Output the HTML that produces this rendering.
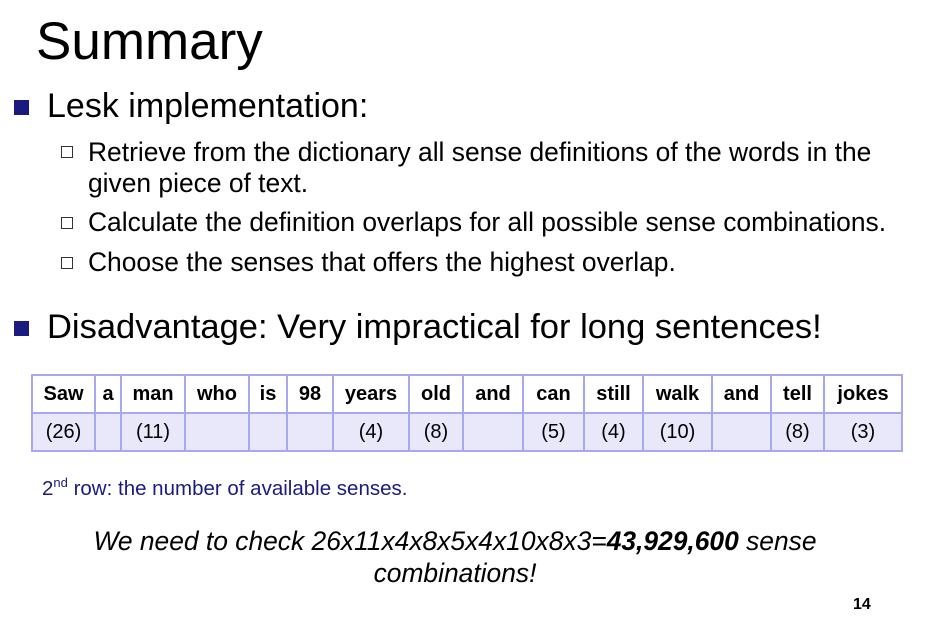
<!DOCTYPE html><html><head><style>
body{margin:0;width:936px;height:625px;background:#fff;font-family:"Liberation Sans",Arial,sans-serif;position:relative;overflow:hidden}
.a{position:absolute;white-space:nowrap}
.sq{position:absolute;width:15px;height:15px;background:#1a1a80}
.hs{position:absolute;width:12px;height:12px;border:1px solid #333;box-sizing:border-box}
table{position:absolute;left:31px;top:374px;border-collapse:collapse}
td{border:2px solid #a8a8f0;text-align:center;font-size:20px;padding:0;height:36px}
tr.h td{font-weight:bold;background:#fff}
tr.n td{background:#e8e8fa}
</style></head><body>
<div class="a" style="left:36px;top:11px;font-size:53px">Summary</div>
<div class="sq" style="left:14px;top:100px"></div>
<div class="a" style="left:47px;top:87px;font-size:34px">Lesk implementation:</div>
<div class="hs" style="left:61px;top:146px"></div>
<div class="a" style="left:88px;top:137px;font-size:26.4px;line-height:31px">Retrieve from the dictionary all sense definitions of the words in the<br>given piece of text.</div>
<div class="hs" style="left:61px;top:217px"></div>
<div class="a" style="left:88px;top:207px;font-size:26.4px">Calculate the definition overlaps for all possible sense combinations.</div>
<div class="hs" style="left:61px;top:257px"></div>
<div class="a" style="left:88px;top:247px;font-size:26.4px">Choose the senses that offers the highest overlap.</div>
<div class="sq" style="left:14px;top:321px"></div>
<div class="a" style="left:47px;top:308px;font-size:34.5px">Disadvantage: Very impractical for long sentences!</div>
<table>
<colgroup><col style="width:63px"><col style="width:26px"><col style="width:64px"><col style="width:64px"><col style="width:38px"><col style="width:46px"><col style="width:76px"><col style="width:54px"><col style="width:60px"><col style="width:61px"><col style="width:59px"><col style="width:69px"><col style="width:59px"><col style="width:53px"><col style="width:78px"></colgroup>
<tr class="h"><td>Saw</td><td>a</td><td>man</td><td>who</td><td>is</td><td>98</td><td>years</td><td>old</td><td>and</td><td>can</td><td>still</td><td>walk</td><td>and</td><td>tell</td><td>jokes</td></tr>
<tr class="n"><td>(26)</td><td></td><td>(11)</td><td></td><td></td><td></td><td>(4)</td><td>(8)</td><td></td><td>(5)</td><td>(4)</td><td>(10)</td><td></td><td>(8)</td><td>(3)</td></tr>
</table>
<div class="a" style="left:42px;top:475px;font-size:20.5px;color:#1a1a80">2<sup style="font-size:13px">nd</sup> row: the number of available senses.</div>
<div class="a" style="left:0;width:910px;top:525px;font-size:26.4px;font-style:italic;text-align:center;line-height:32px">We need to check 26x11x4x8x5x4x10x8x3=<b>43,929,600</b> sense<br>combinations!</div>
<div class="a" style="left:853px;top:596px;font-size:16px;font-weight:bold">14</div>
</body></html>
